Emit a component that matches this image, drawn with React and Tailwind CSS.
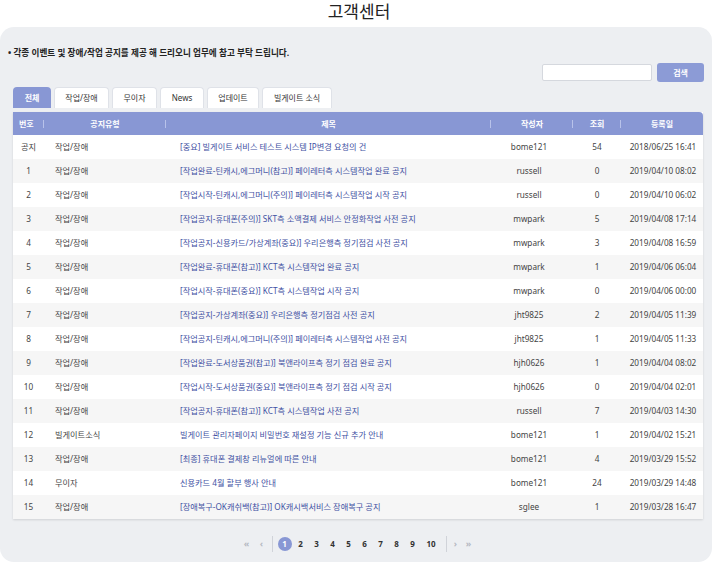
import React from "react";

const rows = [
  ["공지", "작업/장애", "[중요] 빌게이트 서비스 테스트 시스템 IP변경 요청의 건", "bome121", "54", "2018/06/25 16:41"],
  ["1", "작업/장애", "[작업완료-틴캐시,에그머니(참고)] 페이레터측 시스템작업 완료 공지", "russell", "0", "2019/04/10 08:02"],
  ["2", "작업/장애", "[작업시작-틴캐시,에그머니(주의)] 페이레터측 시스템작업 시작 공지", "russell", "0", "2019/04/10 06:02"],
  ["3", "작업/장애", "[작업공지-휴대폰(주의)] SKT측 소액결제 서비스 안정화작업 사전 공지", "mwpark", "5", "2019/04/08 17:14"],
  ["4", "작업/장애", "[작업공지-신용카드/가상계좌(중요)] 우리은행측 정기점검 사전 공지", "mwpark", "3", "2019/04/08 16:59"],
  ["5", "작업/장애", "[작업완료-휴대폰(참고)] KCT측 시스템작업 완료 공지", "mwpark", "1", "2019/04/06 06:04"],
  ["6", "작업/장애", "[작업시작-휴대폰(중요)] KCT측 시스템작업 시작 공지", "mwpark", "0", "2019/04/06 00:00"],
  ["7", "작업/장애", "[작업공지-가상계좌(중요)] 우리은행측 정기점검 사전 공지", "jht9825", "2", "2019/04/05 11:39"],
  ["8", "작업/장애", "[작업공지-틴캐시,에그머니(주의)] 페이레터측 시스템작업 사전 공지", "jht9825", "1", "2019/04/05 11:33"],
  ["9", "작업/장애", "[작업완료-도서상품권(참고)] 북앤라이프측 정기 점검 완료 공지", "hjh0626", "1", "2019/04/04 08:02"],
  ["10", "작업/장애", "[작업시작-도서상품권(중요)] 북앤라이프측 정기 점검 시작 공지", "hjh0626", "0", "2019/04/04 02:01"],
  ["11", "작업/장애", "[작업공지-휴대폰(참고)] KCT측 시스템작업 사전 공지", "russell", "7", "2019/04/03 14:30"],
  ["12", "빌게이트소식", "빌게이트 관리자페이지 비밀번호 재설정 기능 신규 추가 안내", "bome121", "1", "2019/04/02 15:21"],
  ["13", "작업/장애", "[최종] 휴대폰 결제창 리뉴얼에 따른 안내", "bome121", "4", "2019/03/29 15:52"],
  ["14", "무이자", "신용카드 4월 할부 행사 안내", "bome121", "24", "2019/03/29 14:48"],
  ["15", "작업/장애", "[장애복구-OK캐쉬백(참고)] OK캐시백서비스 장애복구 공지", "sglee", "1", "2019/03/28 16:47"],
];

const tabs = ["전체", "작업/장애", "무이자", "News", "업데이트", "빌게이트 소식"];
const tabW = ["w-[38px]", "w-[55px]", "w-[45px]", "w-[44px]", "w-[52px]", "w-[70px]"];

const grid = "grid grid-cols-[31px_122px_325px_82px_48px_82px]";
const sep = "relative after:absolute after:right-0 after:top-[8px] after:h-[8px] after:w-px after:bg-[#b8c2ea]";

export default function App() {
  return (
    <div
      className="w-[716px] h-[566px] bg-white text-[#333] overflow-hidden"
      style={{ fontFamily: '"Noto Sans", "Noto Sans CJK KR", sans-serif' }}
    >
      <div className="h-[27px] flex justify-center items-center pl-[2px] text-[17px] leading-none text-[#222] pb-[4px]">
        고객센터
      </div>
      <div className="w-[712px] h-[535px] bg-[#edeff2] rounded-[14px] px-[13px] pt-[20px]">
        <div className="-ml-[5px] text-[8.6px] font-bold leading-[12px] text-[#222] h-[12px]">
          • 각종 이벤트 및 장애/작업 공지를 제공 해 드리오니 업무에 참고 부탁 드립니다.
        </div>
        <div className="flex justify-end items-center gap-[5px] mt-[4px] -mr-[5px] h-[19px]">
          <div className="w-[110px] h-[17px] bg-white border border-[#d5d8de] rounded-[2px]" />
          <div className="w-[47px] h-[19px] bg-[#8c9bd6] rounded-[3px] flex items-center justify-center text-white text-[8px] font-bold">
            검색
          </div>
        </div>
        <div className="flex gap-[3px] mt-[5px] h-[21px] items-end">
          {tabs.map((t, i) => (
            <div
              key={t}
              className={`${tabW[i]} h-[21px] rounded-t-[4px] flex items-center justify-center text-[8px] ${
                i === 0
                  ? "bg-[#8897d4] text-white font-bold"
                  : "bg-white text-[#333] border border-b-0 border-[#dfe2e8]"
              }`}
            >
              {t}
            </div>
          ))}
        </div>
        <div className="mt-[4px] w-[690px] bg-white shadow-[0_1px_2px_rgba(0,0,0,0.12)]">
          <div className={`${grid} h-[23px] bg-[#8897d4] text-white text-[8px] font-bold rounded-tr-[4px] items-center`}>
            <div className={`${sep} h-full flex items-center pl-[6px]`}>번호</div>
            <div className={`${sep} h-full flex items-center justify-center`}>공지유형</div>
            <div className={`${sep} h-full flex items-center justify-center`}>제목</div>
            <div className={`${sep} h-full flex items-center justify-center`}>작성자</div>
            <div className={`${sep} h-full flex items-center justify-center`}>조회</div>
            <div className="h-full flex items-center justify-center">등록일</div>
          </div>
          {rows.map((r, i) => (
            <div
              key={i}
              className={`${grid} h-[24px] items-center text-[8.2px] text-[#444] ${
                i % 2 === 1 ? "bg-[#f6f6f6]" : "bg-white"
              }`}
            >
              <div className="text-center">{r[0]}</div>
              <div className="pl-[11px]">{r[1]}</div>
              <div className="pl-[14px] text-[#3f51a3] whitespace-nowrap">{r[2]}</div>
              <div className="text-center pr-[6px]">{r[3]}</div>
              <div className="text-center">{r[4]}</div>
              <div className="text-center pl-[2px]">{r[5]}</div>
            </div>
          ))}
        </div>
        <div className="flex items-center justify-center mt-[16px] h-[18px] text-[8px] font-bold text-[#333] pl-[2px]">
          <span className="w-[18px] text-center text-[#b5b9c2] text-[9px]">«</span>
          <span className="w-[12px] text-center text-[#b5b9c2] text-[9px]">‹</span>
          <span className="w-px h-[16px] bg-[#d0d3d9] mx-[4px]" />
          <span className="w-[14px] h-[14px] rounded-full bg-[#8897d4] text-white flex items-center justify-center mx-[1px]">1</span>
          {["2", "3", "4", "5", "6", "7", "8", "9", "10"].map((n) => (
            <span key={n} className={`${n === "10" ? "w-[21px]" : "w-[16px]"} text-center`}>
              {n}
            </span>
          ))}
          <span className="w-px h-[16px] bg-[#d0d3d9] mx-[4px]" />
          <span className="w-[10px] text-center text-[#b5b9c2] text-[9px]">›</span>
          <span className="w-[16px] text-center text-[#b5b9c2] text-[9px]">»</span>
        </div>
      </div>
    </div>
  );
}
